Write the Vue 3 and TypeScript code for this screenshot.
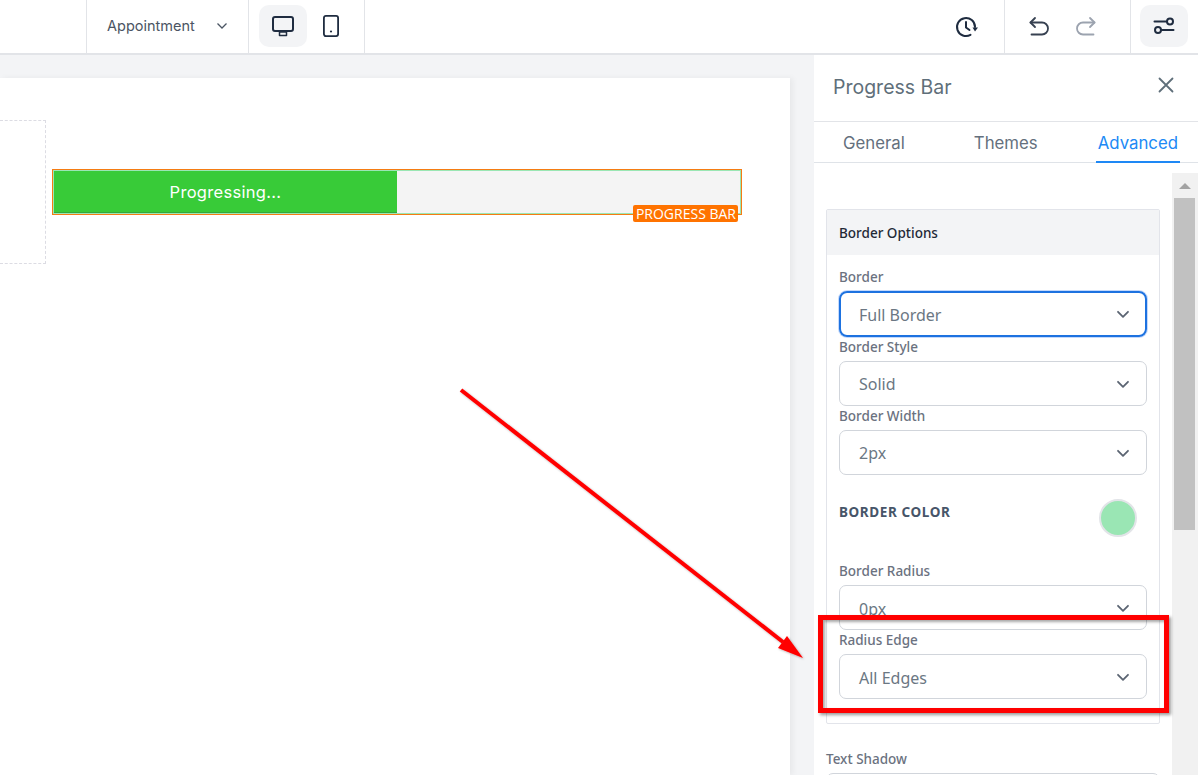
<script setup lang="ts">
interface Field { label: string; value: string }
const topFields: Field[] = [
  { label: 'Border', value: 'Full Border' },
  { label: 'Border Style', value: 'Solid' },
  { label: 'Border Width', value: '2px' },
]
const bottomFields: Field[] = [
  { label: 'Border Radius', value: '0px' },
  { label: 'Radius Edge', value: 'All Edges' },
]
const tabs = ['General', 'Themes', 'Advanced']
</script>

<template>
  <div class="app">
    <header class="topbar">
      <div class="cell logo-cell"></div>
      <div class="cell page-cell">
        <span>Appointment</span>
        <svg width="12" height="8" viewBox="0 0 12 8" fill="none" stroke="#4b5563" stroke-width="1.3"><path d="M1.500 1.500 6 6l4.500-4.500" /></svg>
      </div>
      <div class="cell device-cell">
        <button class="icon-btn active">
          <svg width="24" height="24" viewBox="0 0 24 24" fill="none" stroke="#1f2c40" stroke-width="2" stroke-linejoin="round"><rect x="2" y="3" width="20" height="14" rx="2" /><path stroke-width="1.500" d="M8.500 18h7v3.500h-7z" /></svg>
        </button>
        <button class="icon-btn">
          <svg width="24" height="24" viewBox="0 0 24 24" fill="none" stroke="#1f2c40" stroke-width="1.800"><rect x="4.900" y="1.900" width="14.200" height="20.200" rx="2" /><circle cx="12" cy="17.500" r="1.100" fill="#1f2c40" stroke="none" /></svg>
        </button>
      </div>
      <div class="spacer"></div>
      <div class="cell history-cell">
        <svg width="24" height="24" viewBox="0 0 24 24" fill="none" stroke="#1f2c40" stroke-width="2" stroke-linecap="round" stroke-linejoin="round"><path d="M21 12A9 9 0 1 0 16.500 19.800" /><path d="M12 7v5.500l3.500 2.500" /><path d="M18.500 12.500h5.500l-3 4z" fill="#1f2c40" stroke="none" /></svg>
      </div>
      <div class="cell undo-cell">
        <svg width="22" height="22" viewBox="0 0 22 22" fill="none" stroke="#374151" stroke-width="1.800" stroke-linecap="round" stroke-linejoin="round"><path d="M7 2 2.500 6.500 7 11" /><path d="M2.500 6.500h11.500a6 6 0 0 1 0 12H3.500" /></svg>
        <svg width="22" height="22" viewBox="0 0 22 22" fill="none" stroke="#9ca3af" stroke-width="1.800" stroke-linecap="round" stroke-linejoin="round"><path d="M15 2 19.500 6.500 15 11" /><path d="M19.500 6.500H8a6 6 0 0 0 0 12h10.500" /></svg>
      </div>
      <div class="cell settings-cell">
        <button class="icon-btn active">
          <svg width="24" height="24" viewBox="0 0 24 24" fill="none" stroke="#1f2c40" stroke-width="2" stroke-linecap="round"><path d="M2.500 7.500h12.500M9.500 16H21.500" /><circle cx="18" cy="7.500" r="3" /><circle cx="6" cy="16" r="3" /></svg>
        </button>
      </div>
    </header>

    <div class="workspace">
      <main class="canvas">
        <div class="page">
          <div class="empty-col"></div>
          <div class="progress-outer">
            <div class="progress-track">
              <div class="progress-fill">Progressing...</div>
            </div>
            <span class="tag">PROGRESS BAR</span>
          </div>
        </div>
      </main>

      <aside class="panel">
        <div class="panel-head">
          <h2>Progress Bar</h2>
          <svg width="16" height="16" viewBox="0 0 16 16" fill="none" stroke="#5f6f7a" stroke-width="1.800" stroke-linecap="round"><path d="M1.500 1.500l13 13M14.500 1.500l-13 13" /></svg>
        </div>
        <nav class="tabs">
          <span v-for="tab in tabs" :key="tab" class="tab" :class="{ on: tab === 'Advanced' }">{{ tab }}</span>
        </nav>
        <div class="scroll-area">
          <div class="scroll-content">
            <section class="card">
              <div class="card-head">Border Options</div>
              <div class="card-body">
                <div v-for="(f, i) in topFields" :key="f.label" class="field">
                  <label>{{ f.label }}</label>
                  <div class="select" :class="{ focus: i === 0 }">
                    <span>{{ f.value }}</span>
                    <svg width="14" height="9" viewBox="0 0 14 9" fill="none" stroke="#5b6472" stroke-width="1.800" stroke-linecap="round" stroke-linejoin="round"><path d="M2 1.800 7 6.800l5-5" /></svg>
                  </div>
                </div>
                <div class="color-row">
                  <span class="color-label">BORDER COLOR</span>
                  <span class="swatch"></span>
                </div>
                <div v-for="f in bottomFields" :key="f.label" class="field">
                  <label>{{ f.label }}</label>
                  <div class="select low">
                    <span>{{ f.value }}</span>
                    <svg width="14" height="9" viewBox="0 0 14 9" fill="none" stroke="#5b6472" stroke-width="1.800" stroke-linecap="round" stroke-linejoin="round"><path d="M2 1.800 7 6.800l5-5" /></svg>
                  </div>
                </div>
              </div>
            </section>
            <div class="shadow-field">
              <label>Text Shadow</label>
              <div class="select stub"></div>
            </div>
          </div>
          <div class="scrollbar">
            <div class="sb-btn"><i></i></div>
            <div class="sb-thumb"></div>
          </div>
        </div>
      </aside>
    </div>

    <svg class="arrow" width="1198" height="775" viewBox="0 0 1198 775">
      <defs>
        <filter id="ds" x="-10%" y="-10%" width="120%" height="120%"><feDropShadow dx="1" dy="1" stdDeviation="1" flood-color="#000" flood-opacity=".3" /></filter>
      </defs>
      <g filter="url(#ds)" fill="#ff0000">
        <path d="M461 390 783 642" stroke="#ff0000" stroke-width="4" />
        <path d="M803 658 778 648 787 636z" />
      </g>
    </svg>
    <div class="highlight"></div>
  </div>
</template>

<style>
html, body { margin: 0; overflow: hidden; background: #fff; }
</style>

<style scoped>
* { box-sizing: border-box; }
.app {
  position: relative;
  width: 1198px;
  height: 775px;
  overflow: hidden;
  font-family: Inter, "Liberation Sans", sans-serif;
  background: #fff;
}
.topbar {
  display: flex;
  height: 55px;
  border-bottom: 2px solid #e2e4e8;
  background: #fff;
}
.cell {
  display: flex;
  align-items: center;
  border-right: 1px solid #e2e4e8;
  height: 53px;
}
.logo-cell { width: 87px; }
.page-cell {
  width: 162px;
  padding: 0 20px 2px 20px;
  justify-content: space-between;
  font-size: 14.500px;
  color: #4b5563;
}
.device-cell { width: 116px; padding-left: 10px; }
.icon-btn {
  display: flex;
  align-items: center;
  justify-content: center;
  width: 48px;
  height: 42px;
  margin-top: -1px;
  padding: 0;
  border: 0;
  border-radius: 10px;
  background: transparent;
}
.icon-btn.active { background: #f3f4f6; }
.spacer { flex: 1; }
.history-cell { width: 76px; padding-left: 25px; }
.undo-cell { width: 126px; padding-left: 23px; gap: 25px; }
.settings-cell { border-right: 0; padding-left: 9px; width: 67px; }
.workspace { display: flex; height: 720px; }
.canvas {
  flex: 1;
  min-width: 0;
  padding: 23px 24px 0 0;
  background: #f3f4f6;
}
.page {
  display: flex;
  align-items: flex-start;
  height: 100%;
  padding-top: 42px;
  background: #fff;
  box-shadow: 3px 0 6px rgba(0, 0, 0, 0.05);
}
.empty-col {
  width: 46px;
  height: 144px;
  border: 1px dashed #dcdce3;
  border-left: 0;
}
.progress-outer {
  position: relative;
  width: 690px;
  height: 46px;
  margin: 49px 0 0 6px;
  border: 1px solid #f57c13;
}
.progress-track {
  height: 100%;
  border: 1px solid #9ae6b4;
  background: #f4f4f4;
}
.progress-fill {
  display: flex;
  align-items: center;
  justify-content: center;
  width: 343px;
  height: 100%;
  border-bottom: 1px solid #33a83b;
  background: #38cb38;
  color: #fff;
  font-size: 16.500px;
  letter-spacing: 0.3px;
}
.tag {
  position: absolute;
  right: 3px;
  bottom: -8px;
  padding: 0 2px 0 3px;
  height: 17px;
  line-height: 17px;
  border-radius: 2px;
  background: #ff7300;
  color: #fff;
  font-family: "Open Sans", sans-serif;
  font-size: 14px;
  white-space: nowrap;
}
.panel {
  display: flex;
  flex-direction: column;
  width: 384px;
  background: #fff;
}
.panel-head {
  display: flex;
  align-items: center;
  justify-content: space-between;
  height: 67px;
  padding: 0 24px 2px 19px;
  border-bottom: 1px solid #e2e4e8;
}
.panel-head svg { margin-top: -4px; }
.panel-head h2 {
  margin: 0;
  font-size: 19.500px;
  font-weight: 400;
  color: #5f6f7a;
}
.tabs {
  display: flex;
  height: 41px;
  border-bottom: 1px solid #dfe3e8;
  padding-left: 29px;
  font-size: 16.800px;
  color: #64707d;
}
.tab {
  line-height: 42px;
  margin-right: 69px;
  white-space: nowrap;
}
.tab.on {
  margin: 0 0 -1px -11px;
  padding: 0 2px;
  height: 41px;
  color: #2089f5;
  border-bottom: 2px solid #1e88f5;
}
.scroll-area {
  display: flex;
  flex: 1;
  min-height: 0;
  overflow: hidden;
}
.scroll-content {
  flex: 1;
  padding: 46px 12px 0;
}
.card {
  width: 334px;
  height: 515px;
  border: 1px solid #e2e4ea;
  border-radius: 2px;
}
.card-head {
  height: 45px;
  padding-left: 12px;
  line-height: 47px;
  background: #f3f4f6;
  font-family: "Noto Sans", sans-serif;
  font-size: 13.500px;
  font-weight: 500;
  color: #1f2937;
}
.card-body { padding: 12px 12px 0; }
.field label, .shadow-field label {
  display: block;
  height: 24px;
  line-height: 20px;
  font-family: "Noto Sans", sans-serif;
  font-size: 13.500px;
  font-weight: 500;
  color: #6b7280;
}
.select {
  display: flex;
  align-items: center;
  justify-content: space-between;
  height: 45px;
  padding: 1px 16px 0 19px;
  border: 1px solid #d1d5db;
  border-radius: 7px;
  font-family: "Noto Sans", sans-serif;
  font-size: 16px;
  color: #6b7783;
}
.select.low span { margin-top: 2px; }
.select.focus {
  height: 46px;
  border: 2px solid #1d72e0;
  border-radius: 8px;
  padding: 1px 15px 0 18px;
  box-shadow: 0 0 0 1px rgba(59, 130, 246, 0.3);
}
.color-row {
  display: flex;
  align-items: flex-start;
  justify-content: space-between;
  height: 86px;
  padding: 24px 10px 0 0;
  font-family: "Noto Sans", sans-serif;
}
.color-label {
  margin-top: 4px;
  font-size: 13.500px;
  font-weight: 700;
  letter-spacing: 0.6px;
  color: #475569;
}
.swatch {
  width: 38px;
  height: 38px;
  border-radius: 50%;
  background: #9ae6b4;
  border: 2px solid #e2e4e8;
}
.shadow-field { margin-top: 25px; }
.select.stub { width: 334px; }
.scrollbar {
  position: relative;
  width: 26px;
  margin-top: 10px;
  background: #f1f1f1;
  padding: 0 3px 0 2px;
}
.sb-btn {
  display: flex;
  justify-content: center;
  align-items: center;
  height: 25px;
}
.sb-btn i {
  width: 0;
  height: 0;
  border-left: 6px solid transparent;
  border-right: 6px solid transparent;
  border-bottom: 6px solid #a3a3a3;
}
.sb-thumb {
  height: 332px;
  background: #c1c1c1;
}
.arrow {
  position: absolute;
  inset: 0;
  pointer-events: none;
}
.highlight {
  position: absolute;
  left: 818px;
  top: 615px;
  width: 351px;
  height: 98px;
  border: 5px solid #ff0000;
  box-shadow: 2px 2px 3px rgba(0, 0, 0, 0.4), inset 2px 2px 3px rgba(0, 0, 0, 0.35);
}
</style>
